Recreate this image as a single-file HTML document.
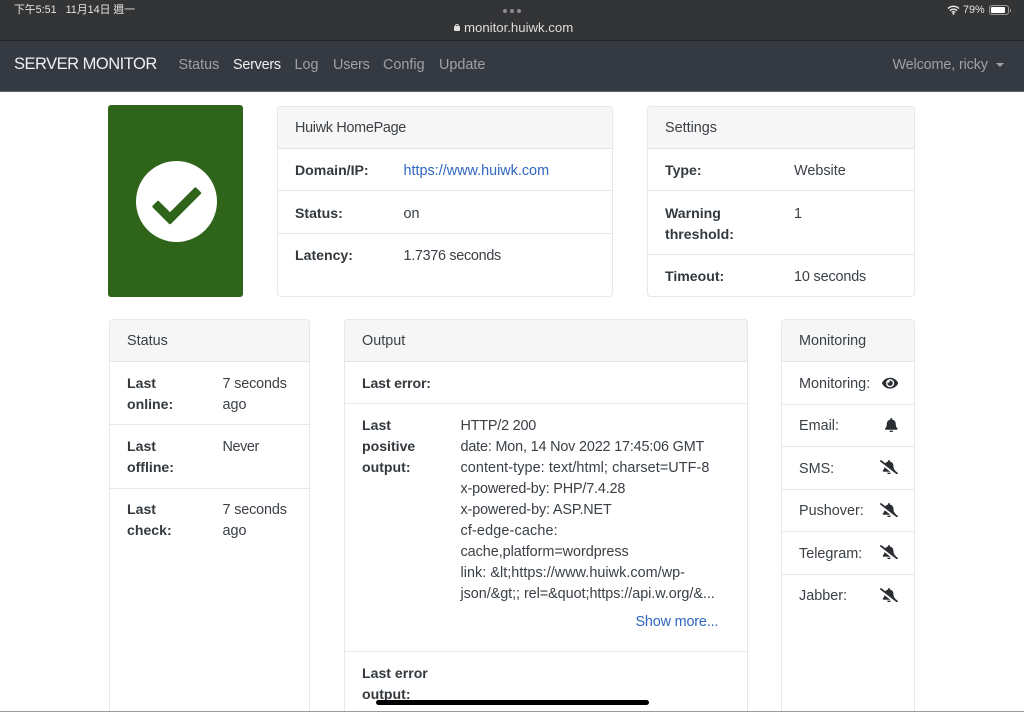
<!DOCTYPE html>
<html><head><meta charset="utf-8"><style>
*{box-sizing:border-box}
html,body{margin:0;padding:0;width:1024px;height:712px;overflow:hidden;background:#fff}
body{position:relative;font-family:"Liberation Sans","Noto Sans CJK TC",sans-serif;font-size:14.4px;line-height:21px;color:#3a4046}
.t{position:absolute;white-space:nowrap;line-height:21px;margin-top:1px}
.s{margin-top:0}
b.t{font-weight:700;color:#33393e;font-size:14.1px;margin-top:0}
.box{position:absolute;background:#fff;border:1px solid #e6e7e9;border-radius:4px;overflow:hidden}
.head{position:absolute;left:0;right:0;top:0;height:42px;background:#f6f6f6;border-bottom:1px solid #e3e4e6}
.l{position:absolute;height:1px;background:#e6e7e9}
.n{position:absolute;top:55px;line-height:21px;color:#9ea2a6;white-space:nowrap;font-size:14.4px}
a{color:#2f66c0;text-decoration:none}
svg{position:absolute}
</style></head><body>
<div style="position:absolute;left:0;top:0;width:1024px;height:41px;background:#333436;border-bottom:1px solid #232426"></div>
<div style="position:absolute;left:0;top:41px;width:1024px;height:51px;background:#353942;border-bottom:1px solid #5d6066"></div>
<span class="t s" style="left:14px;top:0;font-size:10.8px;color:#e4e4e4">下午5:51&nbsp;&nbsp;&nbsp;11月14日 週一</span>
<span style="position:absolute;left:503px;top:8.500px;width:4px;height:4px;border-radius:50%;background:#8a8a8c"></span>
<span style="position:absolute;left:510px;top:8.500px;width:4px;height:4px;border-radius:50%;background:#8a8a8c"></span>
<span style="position:absolute;left:517px;top:8.500px;width:4px;height:4px;border-radius:50%;background:#8a8a8c"></span>
<span style="position:absolute;left:454px;top:26px;width:5.500px;height:4.500px;background:#ddd;border-radius:1px"></span>
<span style="position:absolute;left:455px;top:24px;width:3.500px;height:4px;border:1px solid #ddd;border-radius:2px 2px 0 0"></span>
<span class="t s" style="left:464px;top:17px;font-size:13.200px;color:#dedede">monitor.huiwk.com</span>
<svg style="left:947px;top:5px" width="13" height="10" viewBox="0 0 13 10"><path d="M1 3.500a8 8 0 0 1 11 0M3 5.600a5 5 0 0 1 7 0M4.800 7.400a2.400 2.400 0 0 1 3.400 0" fill="none" stroke="#eee" stroke-width="1.400"/><circle cx="6.500" cy="8.800" r="1" fill="#eee"/></svg>
<span class="t s" style="left:963px;top:0;font-size:10.800px;color:#e4e4e4">79%</span>
<div style="position:absolute;left:989px;top:5px;width:20px;height:10px;border:1px solid #999;border-radius:3px"><div style="width:14px;height:6px;margin:1px;background:#fff;border-radius:1px"></div></div>
<span style="position:absolute;left:1010px;top:8.500px;width:1px;height:3px;background:#999"></span>
<span class="n" style="left:14px;top:54px;color:#f0f0f0;font-size:16.500px;letter-spacing:-.5px">SERVER MONITOR</span>
<span class="n" style="left:178.500px">Status</span>
<span class="n" style="left:233px;color:#f0f0f0;letter-spacing:-.25px">Servers</span>
<span class="n" style="left:294.500px">Log</span>
<span class="n" style="left:333px;letter-spacing:-.2px">Users</span>
<span class="n" style="left:383px">Config</span>
<span class="n" style="left:439px">Update</span>
<span class="n" style="left:892.500px;letter-spacing:-.14px">Welcome, ricky</span>
<span style="position:absolute;left:996px;top:62.500px;border-left:4px solid transparent;border-right:4px solid transparent;border-top:4.500px solid #9ea2a6"></span>

<div style="position:absolute;left:108px;top:105px;width:135px;height:192px;background:#2e651b;border-radius:3px"></div>
<svg style="left:136px;top:161px" width="81" height="81" viewBox="0 0 81 81"><circle cx="40.500" cy="40.500" r="40.500" fill="#fff"/><polygon points="22.100,41.400 34,53.300 59.400,27.900 63.600,32.100 34,61.700 17.900,45.600" fill="#2e651b" stroke="#2e651b" stroke-width="3" stroke-linejoin="round"/></svg>

<div class="box" style="left:277px;top:106px;width:336px;height:191px"><div class="head"></div></div>
<div class="l" style="left:278px;top:190px;width:334px"></div>
<div class="l" style="left:278px;top:233px;width:334px"></div>
<span class="t" style="left:295px;top:117px;letter-spacing:-.3px">Huiwk HomePage</span>
<b class="t" style="left:295px;top:160px">Domain/IP:</b><a class="t" style="left:403.500px;top:160px;color:#2f66c0">https://www.huiwk.com</a>
<b class="t" style="left:295px;top:202.500px">Status:</b><span class="t" style="left:403.500px;top:202.500px">on</span>
<b class="t" style="left:295px;top:245px">Latency:</b><span class="t" style="left:403.500px;top:245px;letter-spacing:-.3px">1.7376 seconds</span>

<div class="box" style="left:647px;top:106px;width:268px;height:191px"><div class="head"></div></div>
<div class="l" style="left:648px;top:190px;width:266px"></div>
<div class="l" style="left:648px;top:254px;width:266px"></div>
<span class="t" style="left:665px;top:117px">Settings</span>
<b class="t" style="left:665px;top:160px">Type:</b><span class="t" style="left:794px;top:160px">Website</span>
<b class="t" style="left:665px;top:202.500px">Warning</b><b class="t" style="left:665px;top:223.500px">threshold:</b><span class="t" style="left:794px;top:202.500px">1</span>
<b class="t" style="left:665px;top:266px">Timeout:</b><span class="t" style="left:794px;top:266px;letter-spacing:-.15px">10 seconds</span>

<div class="box" style="left:109px;top:319px;width:201px;height:420px"><div class="head"></div></div>
<div class="l" style="left:110px;top:424px;width:199px"></div>
<div class="l" style="left:110px;top:488px;width:199px"></div>
<span class="t" style="left:127px;top:330px">Status</span>
<b class="t" style="left:127px;top:372.500px">Last</b><b class="t" style="left:127px;top:393.500px">online:</b>
<span class="t" style="left:222.500px;top:372.500px;letter-spacing:-.15px">7 seconds</span><span class="t" style="left:222.500px;top:393.500px">ago</span>
<b class="t" style="left:127px;top:436px">Last</b><b class="t" style="left:127px;top:457px">offline:</b>
<span class="t" style="left:222.500px;top:436px;letter-spacing:-.4px">Never</span>
<b class="t" style="left:127px;top:499px">Last</b><b class="t" style="left:127px;top:520px">check:</b>
<span class="t" style="left:222.500px;top:499px;letter-spacing:-.15px">7 seconds</span><span class="t" style="left:222.500px;top:520px">ago</span>

<div class="box" style="left:344px;top:319px;width:404px;height:420px"><div class="head"></div></div>
<div class="l" style="left:345px;top:403px;width:402px"></div>
<div class="l" style="left:345px;top:651px;width:402px"></div>
<span class="t" style="left:362px;top:330px">Output</span>
<b class="t" style="left:362px;top:372.500px;letter-spacing:-.15px">Last error:</b>
<b class="t" style="left:362px;top:415px">Last</b><b class="t" style="left:362px;top:436px">positive</b><b class="t" style="left:362px;top:457px">output:</b>
<span class="t" style="left:460.500px;top:415px;letter-spacing:-.2px">HTTP/2 200</span>
<span class="t" style="left:460.500px;top:436px;letter-spacing:-.17px">date: Mon, 14 Nov 2022 17:45:06 GMT</span>
<span class="t" style="left:460.500px;top:457px;letter-spacing:.08px">content-type: text/html; charset=UTF-8</span>
<span class="t" style="left:460.500px;top:478px;letter-spacing:-.17px">x-powered-by: PHP/7.4.28</span>
<span class="t" style="left:460.500px;top:499px;letter-spacing:-.14px">x-powered-by: ASP.NET</span>
<span class="t" style="left:460.500px;top:520px;letter-spacing:.15px">cf-edge-cache:</span>
<span class="t" style="left:460.500px;top:541px;letter-spacing:-.04px">cache,platform=wordpress</span>
<span class="t" style="left:460.500px;top:561.500px;letter-spacing:.04px">link: &amp;lt;https://www.huiwk.com/wp-</span>
<span class="t" style="left:460.500px;top:582.500px;letter-spacing:-.05px">json/&amp;gt;; rel=&amp;quot;https://api.w.org/&amp;...</span>
<a class="t" style="left:635.500px;top:611px;letter-spacing:-.17px">Show more...</a>
<b class="t" style="left:362px;top:663px">Last error</b><b class="t" style="left:362px;top:684px">output:</b>

<div class="box" style="left:781px;top:319px;width:134px;height:420px"><div class="head"></div></div>
<div class="l" style="left:782px;top:403.500px;width:132px"></div>
<div class="l" style="left:782px;top:446px;width:132px"></div>
<div class="l" style="left:782px;top:488.500px;width:132px"></div>
<div class="l" style="left:782px;top:531px;width:132px"></div>
<div class="l" style="left:782px;top:573.500px;width:132px"></div>
<span class="t" style="left:799px;top:330px">Monitoring</span>
<span class="t" style="left:799px;top:372.500px">Monitoring:</span>
<span class="t" style="left:799px;top:415px">Email:</span>
<span class="t" style="left:799px;top:457.500px">SMS:</span>
<span class="t" style="left:799px;top:500px">Pushover:</span>
<span class="t" style="left:799px;top:542.500px">Telegram:</span>
<span class="t" style="left:799px;top:585px">Jabber:</span>
<svg style="left:882px;top:375.500px" width="16.200" height="14.400" viewBox="0 0 576 512"><path fill="#2a2e33" d="M572.52 241.4C518.29 135.59 410.93 64 288 64S57.68 135.64 3.48 241.41a32.35 32.35 0 0 0 0 29.19C57.71 376.41 165.07 448 288 448s230.32-71.64 284.52-177.41a32.35 32.35 0 0 0 0-29.19zM288 400a144 144 0 1 1 144-144 143.93 143.93 0 0 1-144 144zm0-240a95.31 95.31 0 0 0-25.31 3.79 47.85 47.85 0 0 1-66.9 66.9A95.78 95.78 0 1 0 288 160z"/></svg>
<svg style="left:885px;top:417.500px" width="12.600" height="14.400" viewBox="0 0 448 512"><path fill="#2a2e33" d="M224 512c35.32 0 63.97-28.65 63.97-64H160.03c0 35.35 28.65 64 63.97 64zm215.39-149.71c-19.32-20.76-55.47-51.99-55.47-154.29 0-77.7-54.48-139.9-127.94-155.16V32c0-17.67-14.32-32-31.98-32s-31.98 14.33-31.98 32v20.84C118.56 68.1 64.08 130.3 64.08 208c0 102.3-36.15 133.53-55.47 154.29-6 6.45-8.66 14.16-8.61 21.71.11 16.4 12.98 32 32.1 32h383.8c19.12 0 32-15.6 32.1-32 .05-7.55-2.61-15.27-8.61-21.71z"/></svg>
<svg style="left:880px;top:460px" width="18" height="14.400" viewBox="0 0 640 512"><path id="bs" fill="#2a2e33" d="M633.82 458.1l-90.62-70.05c.19-1.38.8-2.66.8-4.05.05-7.55-2.61-15.27-8.61-21.71-19.32-20.76-55.47-51.99-55.47-154.29 0-77.7-54.48-139.9-127.94-155.16V32c0-17.67-14.32-32-31.98-32s-31.98 14.33-31.98 32v20.84c-40.33 8.38-74.66 31.07-97.59 62.57L45.47 3.37C38.49-2.05 28.43-.8 23.01 6.18L3.37 31.45C-2.05 38.42-.8 48.47 6.18 53.9l588.35 454.73c6.98 5.43 17.03 4.17 22.46-2.81l19.64-25.27c5.42-6.97 4.17-17.02-2.81-22.45zM157.23 251.54c-8.61 67.96-36.41 93.33-52.62 110.75-6 6.45-8.66 14.16-8.61 21.71.11 16.4 12.98 32 32.1 32h241.92L157.23 251.54zM320 512c35.32 0 63.97-28.65 63.97-64H256.03c0 35.35 28.65 64 63.97 64z"/></svg>
<svg style="left:880px;top:502.500px" width="18" height="14.400" viewBox="0 0 640 512"><use href="#bs"/></svg>
<svg style="left:880px;top:545px" width="18" height="14.400" viewBox="0 0 640 512"><use href="#bs"/></svg>
<svg style="left:880px;top:587.500px" width="18" height="14.400" viewBox="0 0 640 512"><use href="#bs"/></svg>

<div style="position:absolute;left:376px;top:700px;width:273px;height:5px;background:#000;border-radius:3px"></div>
<div style="position:absolute;left:0;top:711px;width:1024px;height:1px;background:#9a9a9a"></div>
</body></html>
